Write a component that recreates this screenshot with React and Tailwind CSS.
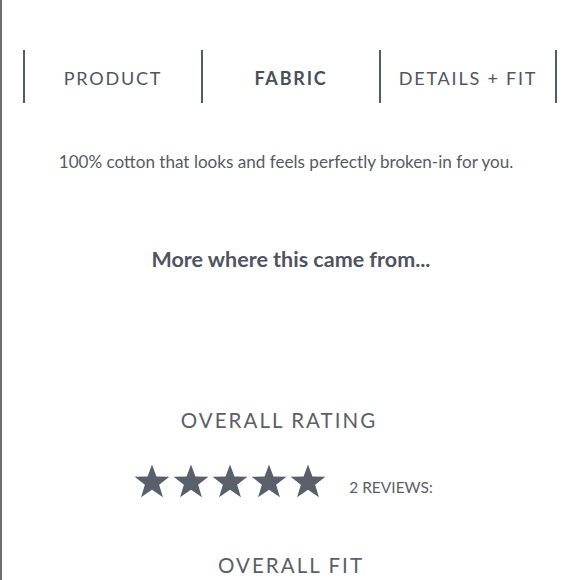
import React from "react";

const tabs = [
  { label: "PRODUCT", active: false },
  { label: "FABRIC", active: true },
  { label: "DETAILS + FIT", active: false },
];

const Star = () => (
  <svg viewBox="0 0 24 24" className="w-[38px] h-[38px]" fill="#59606b">
    <polygon points="12,1.5 14.8,9.2 23,9.3 16.5,14.3 18.9,22.3 12,17.6 5.1,22.3 7.5,14.3 1,9.3 9.2,9.2" />
  </svg>
);

export default function App() {
  return (
    <div
      className="w-[580px] h-[580px] overflow-hidden bg-white border-l-2 border-[#6b6f75] text-[#4d525c]"
      style={{ fontFamily: "Lato, 'Open Sans', sans-serif" }}
    >
      {/* tabs */}
      <div className="flex pl-[21px] pt-[50px]">
        {tabs.map((t, i) => (
          <div
            key={t.label}
            className={`w-[178px] h-[53px] pt-[3px] flex items-center justify-center border-l-2 border-[#555b65] ${
              i === tabs.length - 1 ? "border-r-2" : ""
            }`}
          >
            <span
              className={`text-[18px] tracking-[0.1em] ${
                t.active ? "font-bold text-[#4a4f59]" : "text-[#50555f]"
              }`}
            >
              {t.label}
            </span>
          </div>
        ))}
      </div>

      <p className="mt-[46px] pr-[10px] text-center text-[17.1px] text-[#565b64]">
        100% cotton that looks and feels perfectly broken-in for you.
      </p>

      <h2 className="mt-[68px] text-center text-[21.5px] font-bold text-[#4f545e]">
        More where this came from...
      </h2>

      <div className="mt-[130px] flex flex-col items-center">
        <div className="mr-[24px] text-[20.5px] tracking-[0.1em] text-[#5a5f68]">OVERALL RATING</div>
        <div className="mt-[26px] flex items-center mr-[16px]">
          <div className="flex gap-[1px]">
            <Star />
            <Star />
            <Star />
            <Star />
            <Star />
          </div>
          <span className="ml-[22px] mt-[14px] text-[15.5px] text-[#5a5f68]">2 REVIEWS:</span>
        </div>
        <div className="mt-[50px] text-[20.5px] tracking-[0.1em] text-[#5a5f68]">OVERALL FIT</div>
      </div>
    </div>
  );
}
